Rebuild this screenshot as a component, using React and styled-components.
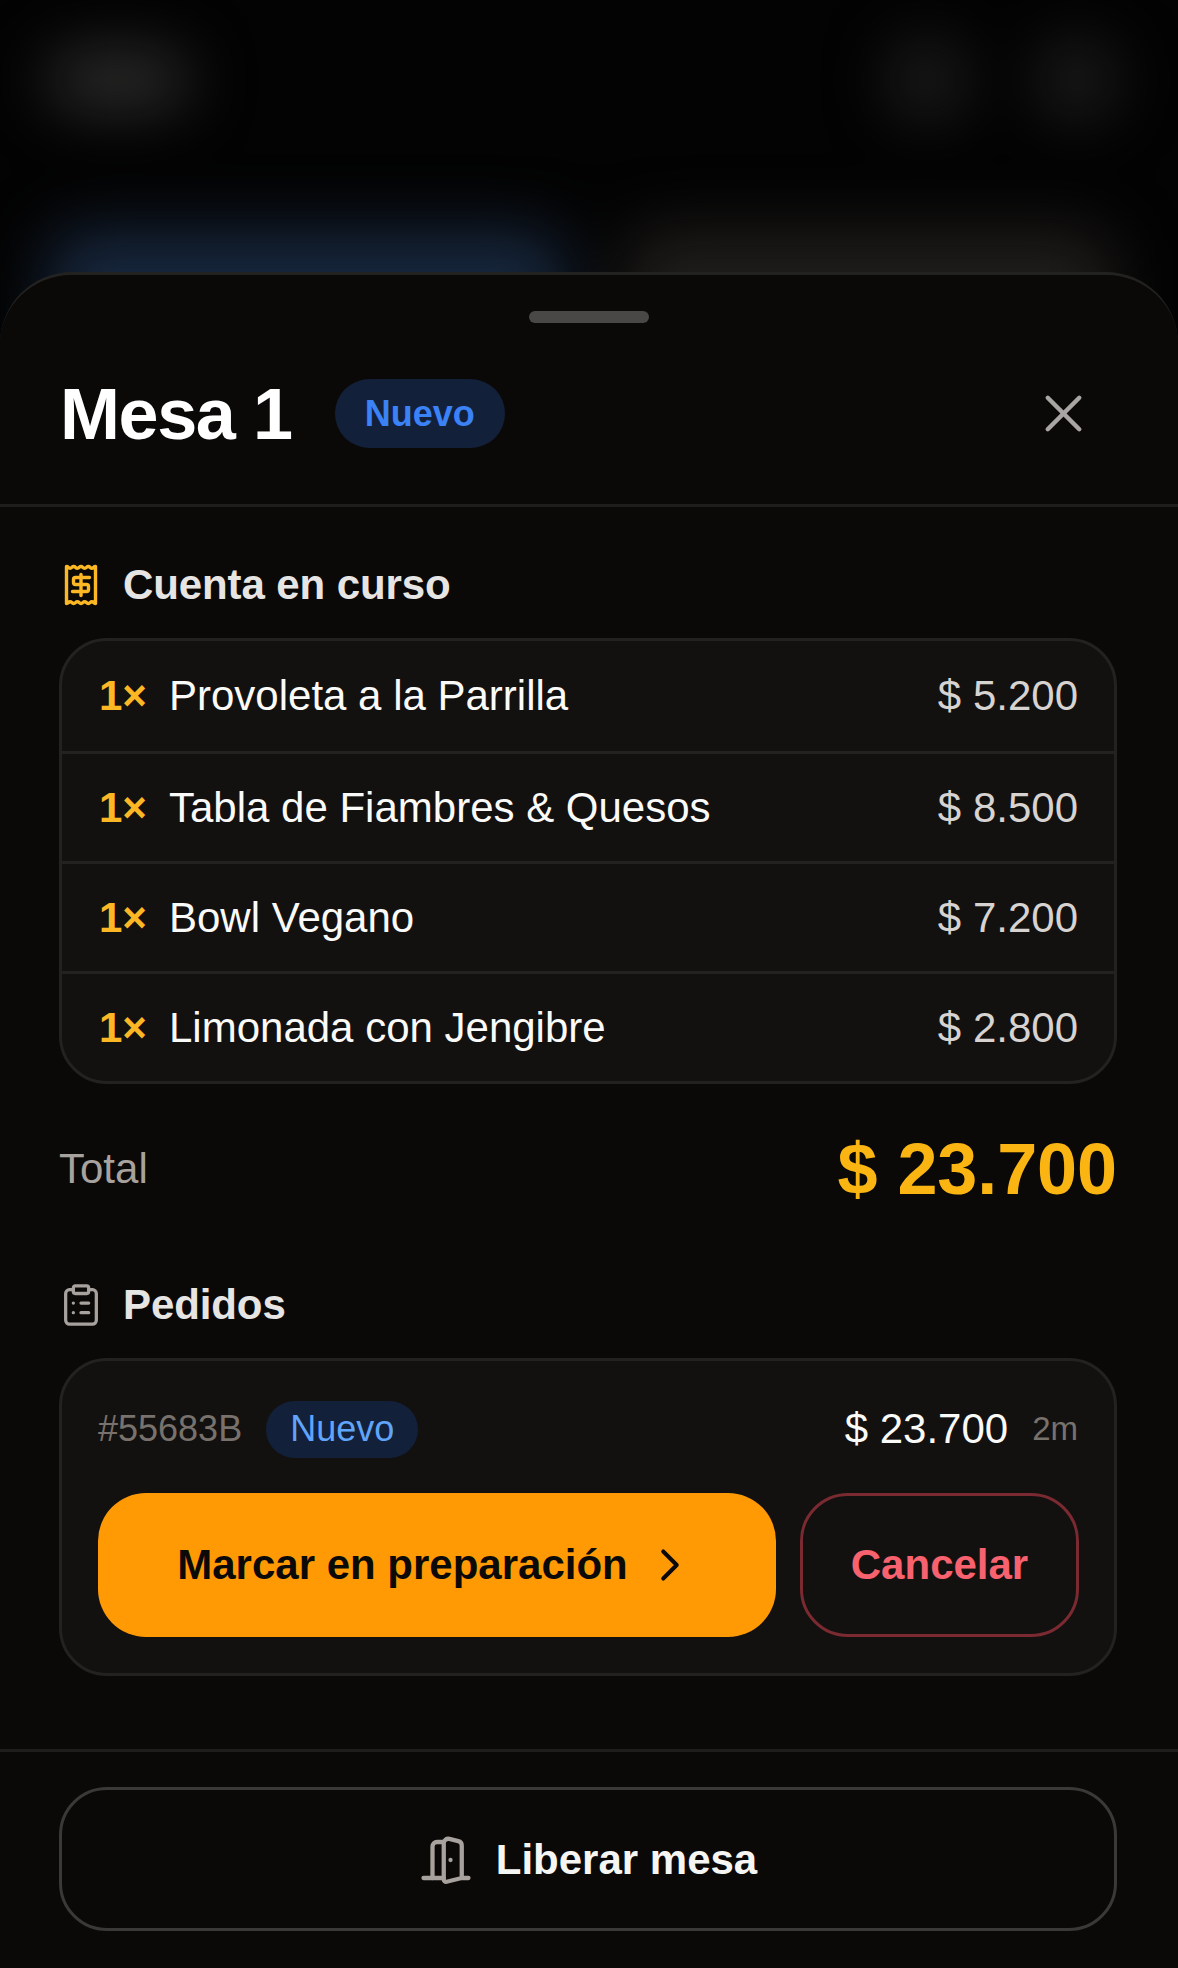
import React from 'react';
import styled, { createGlobalStyle } from 'styled-components';
import { X, ChevronRight, ClipboardList, DoorOpen } from 'lucide-react';

const GlobalStyle = createGlobalStyle`
    html, body {
        margin: 0;
        padding: 0;
        background: #000;
    }
    * {
        box-sizing: border-box;
    }
`;

const Screen = styled.div`
    position: relative;
    width: 1178px;
    height: 1968px;
    overflow: hidden;
    background: #030303;
    font-family: 'Liberation Sans', Arial, sans-serif;
`;

const Backdrop = styled.div`
    display: flex;
    flex-direction: column;
    gap: 116px;
    padding: 45px 66px 0 48px;
    filter: blur(32px);
`;

const BackdropRow = styled.div`
    display: flex;
    justify-content: space-between;
    align-items: center;
    gap: 60px;
`;

const BackdropIcons = styled.div`
    display: flex;
    gap: 80px;
`;

const Blob = styled.div`
    width: ${p => p.w}px;
    height: ${p => p.h}px;
    background: ${p => p.color};
    border-radius: 30px;
`;

const Sheet = styled.div`
    position: absolute;
    left: 0;
    right: 0;
    top: 272px;
    bottom: 0;
    display: flex;
    flex-direction: column;
    background: #0a0908;
    border-top: 3px solid rgba(255, 255, 255, 0.1);
    border-radius: 72px 72px 0 0;
`;

const Handle = styled.div`
    align-self: center;
    width: 120px;
    height: 12px;
    margin-top: 36px;
    border-radius: 6px;
    background: #4a4846;
`;

const Header = styled.div`
    display: flex;
    align-items: center;
    justify-content: space-between;
    height: 184px;
    padding: 0 61px 0 60px;
    border-bottom: 3px solid #1f1e1d;
`;

const TitleGroup = styled.div`
    display: flex;
    align-items: center;
    gap: 43px;
`;

const Title = styled.h1`
    margin: 0;
    font-size: 72px;
    font-weight: 700;
    color: #fff;
    letter-spacing: -1.4px;
`;

const Pill = styled.span`
    display: inline-flex;
    align-items: center;
    justify-content: center;
    border-radius: 999px;
    background: #13203a;
    height: ${p => (p.large ? 69 : 57)}px;
    padding: 0 ${p => (p.large ? 30 : 24)}px;
    font-size: 36px;
    font-weight: ${p => (p.large ? 700 : 400)};
    color: ${p => (p.large ? '#3b82f6' : '#60a5fa')};
`;

const CloseIcon = styled(X)`
    width: 63px;
    height: 63px;
    margin-right: 22px;
    color: #a8a5a2;
`;

const Body = styled.div`
    display: flex;
    flex-direction: column;
    flex: 1;
    padding: 54px 61px 0 59px;
`;

const SectionTitle = styled.div`
    display: flex;
    align-items: center;
    gap: 25px;
    height: 48px;
    margin-bottom: 29px;
    padding-left: 5px;
    font-size: 42px;
    font-weight: 700;
    letter-spacing: -0.1px;
    color: #e7e5e4;
`;

const SectionIcon = styled.span`
    display: flex;
    align-items: center;
    justify-content: center;
    flex-shrink: 0;
    width: 34px;
    height: 42px;
    svg {
        flex-shrink: 0;
    }
`;

const Card = styled.div`
    background: #121110;
    border: 3px solid #232221;
    border-radius: 48px;
`;

const Row = styled.div`
    display: flex;
    align-items: center;
    height: 110px;
    padding: 0 36px 0 37px;
    font-size: 42px;
    color: #fafaf9;
    & + & {
        border-top: 3px solid #232221;
    }
`;

const Qty = styled.span`
    width: 70px;
    font-weight: 700;
    color: #fbb724;
`;

const Name = styled.span`
    flex: 1;
`;

const Price = styled.span`
    color: #d6d3d1;
`;

const TotalRow = styled.div`
    display: flex;
    align-items: center;
    justify-content: space-between;
    height: 84px;
    margin: 43px 0 70px;
`;

const TotalLabel = styled.span`
    font-size: 42px;
    color: #a8a29e;
`;

const TotalValue = styled.span`
    font-size: 72px;
    font-weight: 700;
    letter-spacing: -0.1px;
    color: #fbb513;
`;

const OrderCard = styled(Card)`
    display: flex;
    flex-direction: column;
    gap: 31px;
    padding: 35px 36px 36px;
`;

const OrderMeta = styled.div`
    display: flex;
    align-items: center;
    height: 66px;
`;

const OrderId = styled.span`
    margin-right: 24px;
    font-size: 36px;
    color: #78716c;
`;

const OrderTotal = styled.span`
    margin-left: auto;
    font-size: 42px;
    color: #fafaf9;
`;

const OrderAge = styled.span`
    margin-left: 24px;
    font-size: 33px;
    color: #78716c;
`;

const Actions = styled.div`
    display: flex;
    gap: 24px;
    margin-right: -1px;
`;

const PrimaryButton = styled.button`
    flex: 1;
    display: flex;
    align-items: center;
    justify-content: center;
    gap: 15px;
    height: 144px;
    border: 0;
    border-radius: 48px;
    background: #ff9a05;
    font-family: inherit;
    font-size: 42px;
    font-weight: 700;
    color: #0c0a09;
`;

const CancelButton = styled.button`
    width: 279px;
    height: 144px;
    border: 3px solid #7a2a30;
    border-radius: 48px;
    background: transparent;
    font-family: inherit;
    font-size: 42px;
    font-weight: 700;
    color: #f8626e;
`;

const Footer = styled.div`
    padding: 35px 61px 0 59px;
    height: 219px;
    border-top: 3px solid #1f1e1d;
`;

const ReleaseButton = styled.button`
    display: flex;
    align-items: center;
    justify-content: center;
    gap: 23px;
    width: 100%;
    height: 144px;
    padding-top: 2px;
    border: 3px solid #3a3937;
    border-radius: 48px;
    background: transparent;
    font-family: inherit;
    font-size: 42px;
    font-weight: 700;
    color: #f5f5f4;
`;

const ReceiptIcon = () => (
    <svg width="34" height="42" viewBox="0 0 34 42" fill="none" stroke="#fbb724" strokeWidth="3.4" strokeLinecap="round" strokeLinejoin="round">
        <path d="M2.500 2.500v37c2 0 2-1.800 3.600-1.800s1.800 1.800 3.600 1.800 1.800-1.800 3.700-1.800 1.800 1.800 3.600 1.800 1.800-1.800 3.600-1.800 1.800 1.800 3.700 1.800 1.800-1.800 3.600-1.800 1.600 1.800 3.600 1.800v-37c-2 0-2 1.800-3.600 1.800s-1.800-1.800-3.600-1.800-1.800 1.800-3.700 1.800-1.800-1.800-3.600-1.800-1.800 1.800-3.600 1.800-1.800-1.800-3.700-1.800-1.800 1.800-3.600 1.800-1.600-1.800-3.600-1.800z" />
        <path d="M25.500 13.500H11.500a2 2 0 0 0-2 2v3a2 2 0 0 0 2 2h11a2 2 0 0 1 2 2v3a2 2 0 0 1-2 2H8.500" />
        <path d="M17 10.500v21" />
    </svg>
);

const items = [
    { name: 'Provoleta a la Parrilla', price: '$ 5.200' },
    { name: 'Tabla de Fiambres & Quesos', price: '$ 8.500' },
    { name: 'Bowl Vegano', price: '$ 7.200' },
    { name: 'Limonada con Jengibre', price: '$ 2.800' },
];

const App = () => (
    <Screen>
        <GlobalStyle />
        <Backdrop>
            <BackdropRow>
                <Blob w={140} h={50} color="#353433" />
                <BackdropIcons>
                    <Blob w={70} h={70} color="#242322" />
                    <Blob w={70} h={70} color="#242322" />
                </BackdropIcons>
            </BackdropRow>
            <BackdropRow>
                <Blob w={530} h={200} color="#18283f" />
                <Blob w={500} h={200} color="#201e1c" />
            </BackdropRow>
        </Backdrop>
        <Sheet>
            <Handle />
            <Header>
                <TitleGroup>
                    <Title>Mesa 1</Title>
                    <Pill large>Nuevo</Pill>
                </TitleGroup>
                <CloseIcon strokeWidth={1.7} />
            </Header>
            <Body>
                <SectionTitle>
                    <SectionIcon>
                        <ReceiptIcon />
                    </SectionIcon>
                    Cuenta en curso
                </SectionTitle>
                <Card>
                    {items.map(item => (
                        <Row key={item.name}>
                            <Qty>1×</Qty>
                            <Name>{item.name}</Name>
                            <Price>{item.price}</Price>
                        </Row>
                    ))}
                </Card>
                <TotalRow>
                    <TotalLabel>Total</TotalLabel>
                    <TotalValue>$ 23.700</TotalValue>
                </TotalRow>
                <SectionTitle>
                    <SectionIcon>
                        <ClipboardList size={46} color="#a8a29e" strokeWidth={1.7} />
                    </SectionIcon>
                    Pedidos
                </SectionTitle>
                <OrderCard>
                    <OrderMeta>
                        <OrderId>#55683B</OrderId>
                        <Pill>Nuevo</Pill>
                        <OrderTotal>$ 23.700</OrderTotal>
                        <OrderAge>2m</OrderAge>
                    </OrderMeta>
                    <Actions>
                        <PrimaryButton>
                            Marcar en preparación
                            <ChevronRight size={54} strokeWidth={1.8} />
                        </PrimaryButton>
                        <CancelButton>Cancelar</CancelButton>
                    </Actions>
                </OrderCard>
            </Body>
            <Footer>
                <ReleaseButton>
                    <DoorOpen size={54} color="#a8a29e" strokeWidth={1.9} />
                    Liberar mesa
                </ReleaseButton>
            </Footer>
        </Sheet>
    </Screen>
);

export default App;
